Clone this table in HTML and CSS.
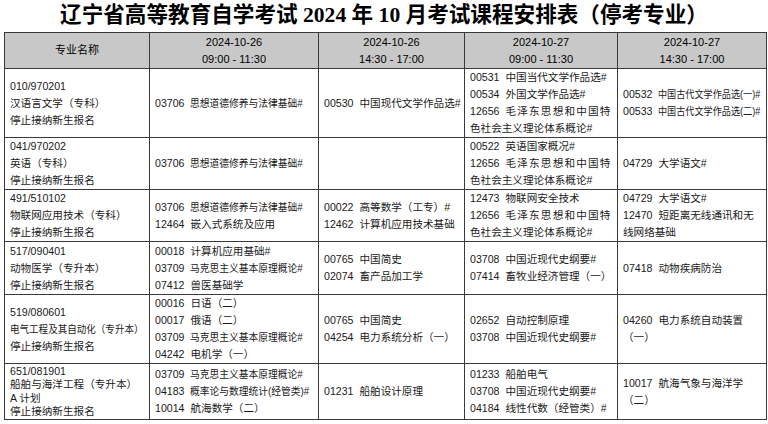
FILE: index.html
```html
<!DOCTYPE html>
<html lang="zh-CN">
<head>
<meta charset="utf-8">
<title>辽宁省高等教育自学考试 2024 年 10 月考试课程安排表（停考专业）</title>
<link rel="stylesheet" href="styles.css">
</head>
<body>
<div class="page">
  <h1 class="title">辽宁省高等教育自学考试 2024 年 10 月考试课程安排表（停考专业）</h1>
  <table class="sched">
    <colgroup>
      <col class="c1"><col class="c2"><col class="c3"><col class="c4"><col class="c5">
    </colgroup>
    <thead>
      <tr class="hd">
        <th>专业名称</th>
        <th>2024-10-26<br>09:00 - 11:30</th>
        <th>2024-10-26<br>14:30 - 17:00</th>
        <th>2024-10-27<br>09:00 - 11:30</th>
        <th>2024-10-27<br>14:30 - 17:00</th>
      </tr>
    </thead>
    <tbody>
      <tr class="r1">
        <td>010/970201<br>汉语言文学（专科）<br>停止接纳新生报名</td>
        <td><span class="c">03706</span><span class="sq s92">思想道德修养与法律基础#</span></td>
        <td><span class="c">00530</span>中国现代文学作品选#</td>
        <td><span class="c">00531</span>中国当代文学作品选#<br><span class="c">00534</span>外国文学作品选#<br><span class="c">12656</span><span class="wide">毛泽东思想和中国特</span><br>色社会主义理论体系概论#</td>
        <td><span class="c">00532</span><span class="sq s86">中国古代文学作品选(一)#</span><br><span class="c">00533</span><span class="sq s86">中国古代文学作品选(二)#</span></td>
      </tr>
      <tr class="r2">
        <td>041/970202<br>英语（专科）<br>停止接纳新生报名</td>
        <td><span class="c">03706</span><span class="sq s92">思想道德修养与法律基础#</span></td>
        <td></td>
        <td><span class="c">00522</span>英语国家概况#<br><span class="c">12656</span><span class="wide">毛泽东思想和中国特</span><br>色社会主义理论体系概论#</td>
        <td><span class="c">04729</span>大学语文#</td>
      </tr>
      <tr class="r3">
        <td>491/510102<br>物联网应用技术（专科）<br>停止接纳新生报名</td>
        <td><span class="c">03706</span><span class="sq s92">思想道德修养与法律基础#</span><br><span class="c">12464</span>嵌入式系统及应用</td>
        <td><span class="c">00022</span>高等数学（工专）#<br><span class="c">12462</span>计算机应用技术基础</td>
        <td><span class="c">12473</span>物联网安全技术<br><span class="c">12656</span><span class="wide">毛泽东思想和中国特</span><br>色社会主义理论体系概论#</td>
        <td><span class="c">04729</span>大学语文#<br><span class="c">12470</span>短距离无线通讯和无<br>线网络基础</td>
      </tr>
      <tr class="r4">
        <td>517/090401<br>动物医学（专升本）<br>停止接纳新生报名</td>
        <td><span class="c">00018</span>计算机应用基础#<br><span class="c">03709</span><span class="sq s92">马克思主义基本原理概论#</span><br><span class="c">07412</span>兽医基础学</td>
        <td><span class="c">00765</span>中国简史<br><span class="c">02074</span>畜产品加工学</td>
        <td><span class="c">03708</span>中国近现代史纲要#<br><span class="c">07414</span>畜牧业经济管理（一）</td>
        <td><span class="c">07418</span>动物疾病防治</td>
      </tr>
      <tr class="r5">
        <td>519/080601<br><span class="sq s90">电气工程及其自动化（专升本）</span><br>停止接纳新生报名</td>
        <td><span class="c">00016</span>日语（二）<br><span class="c">00017</span>俄语（二）<br><span class="c">03709</span><span class="sq s92">马克思主义基本原理概论#</span><br><span class="c">04242</span>电机学（一）</td>
        <td><span class="c">00765</span>中国简史<br><span class="c">04254</span>电力系统分析（一）</td>
        <td><span class="c">02652</span>自动控制原理<br><span class="c">03708</span>中国近现代史纲要#</td>
        <td><span class="c">04260</span>电力系统自动装置<br>（一）</td>
      </tr>
      <tr class="r6">
        <td class="tight">651/081901<br>船舶与海洋工程（专升本）<br>A 计划<br>停止接纳新生报名</td>
        <td><span class="c">03709</span><span class="sq s92">马克思主义基本原理概论#</span><br><span class="c">04183</span><span class="sq s92">概率论与数理统计(经管类)#</span><br><span class="c">10014</span>航海数学（二）</td>
        <td><span class="c">01231</span>船舶设计原理</td>
        <td><span class="c">01233</span>船舶电气<br><span class="c">03708</span>中国近现代史纲要#<br><span class="c">04184</span>线性代数（经管类）#</td>
        <td><span class="c">10017</span>航海气象与海洋学<br>（二）</td>
      </tr>
    </tbody>
  </table>
</div>
</body>
</html>
```

FILE: styles.css
```css
html, body {
  margin: 0;
  padding: 0;
  background: #ffffff;
}

.page {
  width: 768px;
  padding: 0 0 0 4px;
  box-sizing: border-box;
}

.title {
  margin: 0;
  height: 32px;
  line-height: 30px;
  font-family: "Liberation Serif", "Noto Sans CJK SC", serif;
  font-size: 21.6px;
  font-weight: 700;
  text-align: center;
  color: #000;
  padding-right: 4px;
  white-space: nowrap;
}

.sched {
  width: 763px;
  table-layout: fixed;
  border-collapse: collapse;
  font-family: "Liberation Sans", "Noto Sans CJK SC", sans-serif;
  font-size: 10.6px;
  line-height: 17px;
  color: #1a1a1a;
}

.c1 { width: 145px; }
.c2 { width: 169px; }
.c3 { width: 146px; }
.c4 { width: 153px; }
.c5 { width: 149px; }

.sched th,
.sched td {
  border: 1px solid #3a3a3a;
  padding: 0 2px 0 5px;
  vertical-align: middle;
  white-space: nowrap;
  overflow: hidden;
  text-align: left;
}

.sched th {
  background: #c8c8c8;
  font-weight: 400;
  font-size: 11px;
  text-align: center;
  color: #000;
  padding: 0;
}

.hd { height: 36px; }
.r1 { height: 68px; }
.r2 { height: 52px; }
.r3 { height: 51px; }
.r4 { height: 53px; }
.r5 { height: 69px; }
.r6 { height: 56px; }

.c {
  margin-right: 6px;
}

.sq {
  display: inline-block;
  transform-origin: left center;
  vertical-align: top;
}
.s86 { transform: scaleX(0.86); }
.s90 { transform: scaleX(0.9); }
.s92 { transform: scaleX(0.92); }

.wide {
  letter-spacing: 1.2px;
}

.tight {
  line-height: 13.5px;
}
```
